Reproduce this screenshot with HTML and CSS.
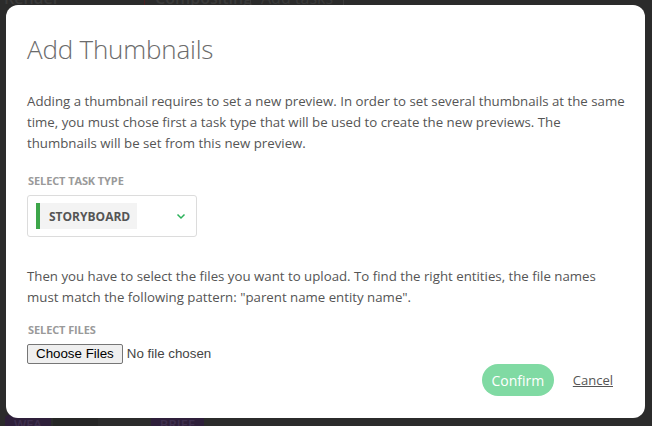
FILE: index.html
```html
<!DOCTYPE html>
<html>
<head>
<meta charset="utf-8">
<link rel="stylesheet" href="styles.css">
</head>
<body>
<div class="app">
  <div class="app-row top">
    <span class="cell c1">Render</span>
    <span class="cell c2">Compositing</span>
    <span class="cell c3">Add tasks</span>
  </div>
  <div class="app-spacer"></div>
  <div class="app-row bottom">
    <span class="tag wfa">WFA</span>
    <span class="thumbs"></span>
    <span class="tag brief">BRIEF</span>
  </div>
</div>
<div class="overlay">
  <div class="modal">
    <h1 class="title">Add Thumbnails</h1>
    <p class="text">Adding a thumbnail requires to set a new preview. In order to set several thumbnails at the same time, you must chose first a task type that will be used to create the new previews. The<br>thumbnails will be set from this new preview.</p>
    <div class="label">SELECT TASK TYPE</div>
    <div class="select">
      <span class="chip"><span class="chip-text">STORYBOARD</span></span>
      <svg class="chevron" width="10" height="7" viewBox="0 0 10 7"><path d="M1.5 1.5 L5 5 L8.5 1.5" fill="none" stroke="#2bb15a" stroke-width="1.5"/></svg>
    </div>
    <p class="text second">Then you have to select the files you want to upload. To find the right entities, the file names<br>must match the following pattern: "parent name entity name".</p>
    <div class="label files">SELECT FILES</div>
    <input class="file" type="file" multiple>
    <div class="actions">
      <button class="confirm">Confirm</button>
      <a class="cancel" href="#">Cancel</a>
    </div>
  </div>
</div>
</body>
</html>
```
FILE: styles.css
```css
html, body {
  margin: 0;
  padding: 0;
}
body {
  width: 652px;
  height: 426px;
  background: #2b2b2b;
  position: relative;
  overflow: hidden;
  font-family: "Open Sans", "Noto Sans", sans-serif;
}
.app {
  display: flex;
  flex-direction: column;
  height: 426px;
}
.app-row {
  display: flex;
  align-items: center;
  height: 20px;
  color: #3a3a3a;
  font-size: 16px;
  font-weight: 600;
}
.app-row.top {
  margin-top: -12px;
}
.cell.c1 { width: 140px; padding-left: 4px; }
.cell.c2 { width: 95px; padding-left: 10px; border-left: 1px solid #4a2020; }
.cell.c3 { padding-left: 10px; border-left: 1px solid #3a3a3a; padding-right: 10px; border-right: 1px solid #3a3a3a; font-weight: 400; }
.app-spacer { flex: 1; }
.app-row.bottom {
  margin-bottom: -8px;
  padding-left: 5px;
}
.tag {
  background: #2e1f3a;
  color: #3e2f4e;
  padding: 0 9px;
  border-radius: 4px;
  font-size: 13px;
  height: 18px;
  line-height: 18px;
}
.thumbs {
  width: 45px;
  height: 18px;
  background: #262626;
  margin-left: 2px;
  margin-right: 10px;
}
.thumbs + .tag {
  margin-left: 43px;
}
.tag.brief {
  box-shadow: -11px 0 0 -10px #4a2020;
}
.overlay {
  position: absolute;
  inset: 0;
}
.modal {
  margin: 5px 7px 0 6px;
  height: 413px;
  box-sizing: border-box;
  background: #fff;
  border-radius: 12px;
  padding: 26px 10px 0 21px;
  display: flex;
  flex-direction: column;
  align-items: flex-start;
}
.title {
  margin: 0;
  font-size: 26px;
  font-weight: 300;
  color: #6b6b6b;
  line-height: 36px;
  letter-spacing: -0.2px;
}
.text {
  margin: 24px 0 0 0;
  width: 600px;
  font-size: 13.25px;
  line-height: 21px;
  color: #555;
  letter-spacing: 0;
}
.text.second {
  margin-top: 29px;
}
.label {
  margin-top: 20px;
  padding-left: 1px;
  font-size: 11px;
  font-weight: 700;
  color: #9a9a9a;
  line-height: 14px;
  letter-spacing: -0.1px;
}
.label.files {
  margin-top: 15px;
}
.select {
  margin-top: 7px;
  width: 170px;
  height: 42px;
  box-sizing: border-box;
  border: 1px solid #dcdcdc;
  border-radius: 3px;
  display: flex;
  align-items: center;
  padding-left: 8px;
  padding-right: 10px;
}
.chip {
  display: flex;
  align-items: center;
  height: 26px;
  width: 101px;
  background: #f3f3f3;
  border-left: 4px solid #3da64a;
  box-sizing: border-box;
  padding-left: 9px;
}
.chip-text {
  font-size: 12px;
  font-weight: 700;
  color: #555;
}
.chevron {
  margin-left: auto;
  margin-top: 1px;
}
.file {
  margin-top: 7px;
  font-family: "Liberation Sans", Arial, sans-serif;
  font-size: 13.33px;
  color: #444;
}
.file::file-selector-button {
  font-family: "Liberation Sans", Arial, sans-serif;
  font-size: 13.33px;
  line-height: 16px;
  color: #000;
  background: #efefef;
  border: 1px solid #767676;
  border-radius: 2px;
  padding: 1px 8px;
  margin-right: 4px;
}
.actions {
  align-self: flex-end;
  display: flex;
  align-items: center;
  gap: 19px;
  margin-top: 0;
  margin-right: 22px;
}
.confirm {
  height: 32px;
  width: 72px;
  border: none;
  border-radius: 16px;
  background: #80daa3;
  color: #fff;
  font-family: "Open Sans", sans-serif;
  font-size: 14px;
  padding: 0;
}
.cancel {
  color: #555;
  font-size: 13px;
  text-decoration: underline;
}
```
